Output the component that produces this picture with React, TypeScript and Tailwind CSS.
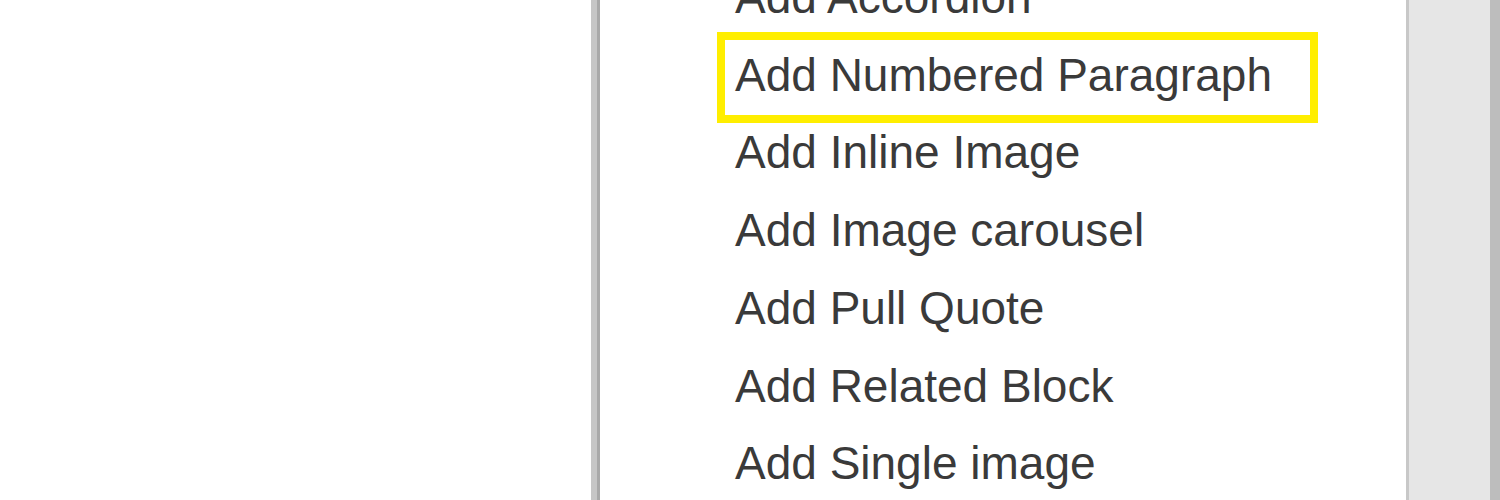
const items = [
  'Add Accordion',
  'Add Numbered Paragraph',
  'Add Inline Image',
  'Add Image carousel',
  'Add Pull Quote',
  'Add Related Block',
  'Add Single image',
];

export default function App() {
  return (
    <div className="flex h-[500px] w-[1500px] overflow-hidden bg-white">
      <div className="w-[591px] shrink-0" />
      <div className="w-[6px] shrink-0 bg-[#c6c6c6]" />
      <div className="w-[3px] shrink-0 bg-[#a9a9a9]" />
      <div className="flex-1 overflow-hidden bg-white">
        <ul
          className="-mt-[41px] pl-[135px] text-[46px] leading-[77.7px] text-[#3a3a3a]"
          style={{ fontFamily: '"Liberation Sans", Arial, sans-serif' }}
        >
          {items.map((item, i) => (
            <li key={item} className="relative whitespace-nowrap">
              {i === 1 && (
                <span className="pointer-events-none absolute -top-[5px] -bottom-[9px] -left-[18px] w-[601px] border-[8px] border-[#ffee00]" />
              )}
              {item}
            </li>
          ))}
        </ul>
      </div>
      <div className="w-[3px] shrink-0 bg-[#c8c8c8]" />
      <div className="w-[81px] shrink-0 bg-[#e6e6e6]" />
      <div className="w-[10px] shrink-0 bg-[#bdbdbd]" />
    </div>
  );
}
